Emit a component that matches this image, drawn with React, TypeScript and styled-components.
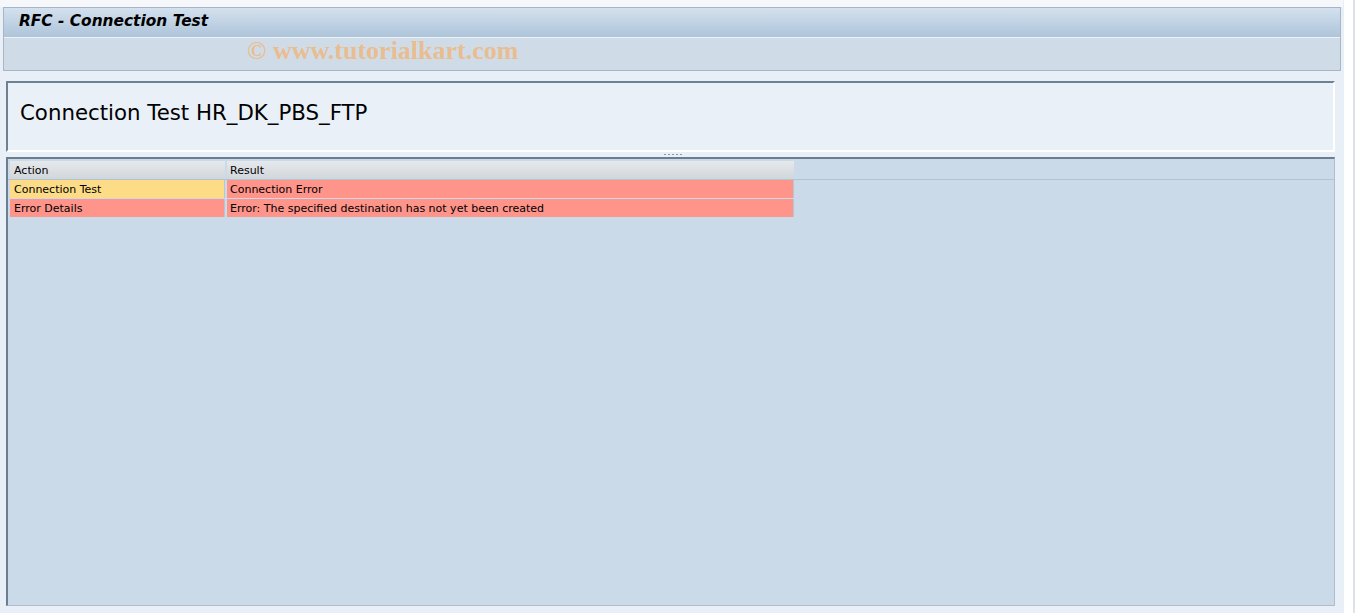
import styled, { createGlobalStyle } from 'styled-components';

const GlobalStyle = createGlobalStyle`
  html, body {
    margin: 0;
    padding: 0;
    background: #e9eff6;
  }
  body {
    font-family: 'DejaVu Sans', Verdana, sans-serif;
  }
`;

const StyledPage = styled.div`
  width: 1355px;
  height: 613px;
  display: flex;
  overflow: hidden;
`;

const StyledMain = styled.div`
  flex: 1;
  display: flex;
  flex-direction: column;
  background: #e9eff6;
  padding-top: 7px;
  background-image: linear-gradient(#f5f7fb, #f5f7fb);
  background-size: 100% 7px;
  background-repeat: no-repeat;
`;

const StyledSideStrip = styled.div`
  width: 9px;
  margin-left: 1px;
  background: #ffffff;
  border-right: 2px solid #dde2e8;
`;

const StyledTitleBar = styled.div`
  margin-left: 3px;
  margin-right: 2px;
  border: 1px solid #a6b6c8;
  display: flex;
  flex-direction: column;
`;

const StyledTitleRow = styled.div`
  height: 30px;
  box-sizing: border-box;
  padding: 0 0 4px 15px;
  display: flex;
  align-items: center;
  background: linear-gradient(#d4e1ee, #adc4da);
  border-bottom: 1px solid #edf2f8;
  font-size: 15.4px;
  font-weight: bold;
  font-style: italic;
  color: #000;
`;

const StyledToolbar = styled.div`
  height: 32px;
  box-sizing: border-box;
  padding: 0 0 6px 243px;
  background: #cfdce8;
  display: flex;
  align-items: center;
`;

const StyledWatermark = styled.span`
  font-family: 'Liberation Serif', 'Times New Roman', serif;
  font-weight: bold;
  font-size: 26px;
  color: #eabd90;
`;

const StyledContent = styled.div`
  flex: 1;
  display: flex;
  flex-direction: column;
  padding: 10px 8px 7px 6px;
`;

const StyledHeaderPanel = styled.div`
  height: 59px;
  border-top: 2px solid #6f8090;
  border-left: 2px solid #6f8090;
  border-right: 2px solid #ffffff;
  border-bottom: 2px solid #ffffff;
  background: #e9f0f7;
  display: flex;
  align-items: center;
  padding: 0 0 8px 12px;
  font-size: 21.3px;
  color: #000;
`;

const StyledSplitter = styled.div`
  height: 5px;
  display: flex;
  justify-content: center;
  align-items: center;
  gap: 2px;
  padding-left: 5px;

  span {
    width: 2px;
    height: 1px;
    background: #8c9aa8;
  }
`;

const StyledGrid = styled.div`
  flex: 1;
  border-top: 2px solid #6b7e8e;
  border-left: 2px solid #6b7e8e;
  border-right: 1px solid #aebccb;
  border-bottom: 1px solid #aebccb;
  background: #cbdae8;
  padding-top: 2px;
`;

const StyledHeaderRow = styled.div`
  display: flex;
  padding-left: 2px;
  gap: 2px;
  border-bottom: 1px solid #b4c3d2;
`;

const StyledHeaderCell = styled.div<{ $width: number }>`
  width: ${({ $width }) => $width}px;
  height: 18px;
  box-sizing: border-box;
  padding-left: 3px;
  display: flex;
  align-items: center;
  font-size: 11px;
  color: #000;
  background: linear-gradient(#e6e9ec, #d1d6db);

  &:first-child {
    padding-left: 4px;
  }
`;

const StyledRow = styled.div`
  display: flex;
  padding-left: 2px;
  gap: 2px;
  margin-bottom: 1px;
`;

const StyledCell = styled.div<{ $width: number; $tone: 'warning' | 'error' }>`
  width: ${({ $width }) => $width}px;
  height: 18px;
  box-sizing: border-box;
  padding-left: 3px;
  display: flex;
  align-items: center;
  font-size: 11px;
  color: #000;
  background: ${({ $tone }) => ($tone === 'warning' ? '#fcdc86' : '#ff948a')};
  border-right: 1px solid #b7c6d5;

  &:first-child {
    padding-left: 4px;
  }
`;

const columns = [
  { title: 'Action', width: 215 },
  { title: 'Result', width: 567 },
];

const rows: { action: string; result: string; actionTone: 'warning' | 'error' }[] = [
  { action: 'Connection Test', result: 'Connection Error', actionTone: 'warning' },
  {
    action: 'Error Details',
    result: 'Error: The specified destination has not yet been created',
    actionTone: 'error',
  },
];

const App = () => {
  return (
    <>
      <GlobalStyle />
      <StyledPage>
        <StyledMain>
          <StyledTitleBar>
            <StyledTitleRow>RFC - Connection Test</StyledTitleRow>
            <StyledToolbar>
              <StyledWatermark>© www.tutorialkart.com</StyledWatermark>
            </StyledToolbar>
          </StyledTitleBar>
          <StyledContent>
            <StyledHeaderPanel>Connection Test HR_DK_PBS_FTP</StyledHeaderPanel>
            <StyledSplitter>
              <span />
              <span />
              <span />
              <span />
              <span />
            </StyledSplitter>
            <StyledGrid>
              <StyledHeaderRow>
                {columns.map((col) => (
                  <StyledHeaderCell key={col.title} $width={col.width}>
                    {col.title}
                  </StyledHeaderCell>
                ))}
              </StyledHeaderRow>
              {rows.map((row) => (
                <StyledRow key={row.action}>
                  <StyledCell $width={columns[0].width} $tone={row.actionTone}>
                    {row.action}
                  </StyledCell>
                  <StyledCell $width={columns[1].width} $tone="error">
                    {row.result}
                  </StyledCell>
                </StyledRow>
              ))}
            </StyledGrid>
          </StyledContent>
        </StyledMain>
        <StyledSideStrip />
      </StyledPage>
    </>
  );
};

export default App;
